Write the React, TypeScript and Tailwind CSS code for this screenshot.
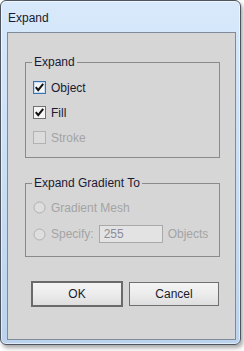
import React from "react";

const font = { fontFamily: '"Liberation Sans", Arial, sans-serif' };

function CheckBox({ checked, variant }: { checked: boolean; variant: "focus" | "normal" | "disabled" }) {
  const border = variant === "focus" ? "#3a74b0" : variant === "normal" ? "#707070" : "#b2b2b2";
  const fill = variant === "disabled" ? "#dcdcdc" : "#f6f6f6";
  return (
    <svg width="13" height="13" viewBox="0 0 13 13" className="shrink-0">
      <rect x="0.5" y="0.5" width="12" height="12" fill={fill} stroke={border} />
      {variant === "focus" && <rect x="1.5" y="1.5" width="10" height="10" fill="none" stroke="#c9ddf2" />}
      {checked && (
        <path d="M2.8 6.2 L5.2 9.2 L10.2 2.8" fill="none" stroke="#111" strokeWidth="2" />
      )}
    </svg>
  );
}

function Radio() {
  return (
    <svg width="13" height="13" viewBox="0 0 13 13" className="shrink-0">
      <circle cx="6.5" cy="6.5" r="5.5" fill="#dedede" stroke="#b0b0b0" />
    </svg>
  );
}

export default function App() {
  return (
    <div className="w-[244px] h-[351px] bg-white" style={font}>
      <div className="w-[241px] h-[345px] flex flex-col rounded-[6px] border border-[#4e555e] bg-[linear-gradient(180deg,#d8e9fb_0%,#cce0f6_40%,#bcd3ed_100%)] shadow-[2px_3px_4px_rgba(0,0,0,0.35),inset_0_0_0_1px_rgba(255,255,255,0.55)]">
        <div className="h-[31px] shrink-0 flex items-center pl-[7px] pt-[2px] text-[12px] text-[#1a1a2e]">
          Expand
        </div>
        <div className="flex-1 ml-[6px] mr-[4px] mb-[4px] border border-[#7f8b98] bg-[#d6d6d6] flex flex-col">
          <fieldset className="ml-[17px] mt-[22px] w-[195px] border border-[#8a8a8a] pl-[6px] pr-[6px] pb-[13px]">
            <legend className="px-[2px] text-[12px] leading-[14px] text-[#1a1a35]">Expand</legend>
            <div className="pt-[12px] pl-[1px] flex flex-col gap-[12px] text-[12px]">
              <div className="h-[13px] flex items-center gap-[5px] text-[#1a1a35]">
                <CheckBox checked variant="focus" />
                <span>Object</span>
              </div>
              <div className="h-[13px] flex items-center gap-[5px] text-[#1a1a35]">
                <CheckBox checked variant="normal" />
                <span>Fill</span>
              </div>
              <div className="h-[13px] flex items-center gap-[5px] text-[#a4a4a4]">
                <CheckBox checked={false} variant="disabled" />
                <span>Stroke</span>
              </div>
            </div>
          </fieldset>
          <fieldset className="ml-[17px] mt-[18px] w-[195px] border border-[#8a8a8a] pl-[6px] pr-[6px] pb-[13px]">
            <legend className="px-[2px] text-[12px] leading-[14px] text-[#1a1a35]">Expand Gradient To</legend>
            <div className="pt-[11px] pl-[1px] flex flex-col gap-[11px] text-[12px] text-[#a4a4a4]">
              <div className="h-[13px] flex items-center gap-[5px]">
                <Radio />
                <span>Gradient Mesh</span>
              </div>
              <div className="h-[18px] flex items-center">
                <Radio />
                <span className="ml-[5px]">Specify:</span>
                <div className="ml-[5px] w-[64px] h-[18px] border border-[#a9a9a9] bg-[#e3e3e3] flex items-center pl-[4px] text-[#8c8c9a]">
                  255
                </div>
                <span className="ml-[5px]">Objects</span>
              </div>
            </div>
          </fieldset>
          <div className="ml-[24px] mt-[25px] flex gap-[7px] text-[12px] text-[#1a1a2e]">
            <button className="w-[90px] h-[24px] border border-[#6a6a6a] outline outline-1 outline-[#6a6a6a] bg-[linear-gradient(180deg,#f4f4f4_0%,#ececec_50%,#dedede_100%)] flex items-center justify-center">
              OK
            </button>
            <button className="w-[90px] h-[24px] border border-[#707070] bg-[linear-gradient(180deg,#f4f4f4_0%,#ececec_50%,#dedede_100%)] flex items-center justify-center">
              Cancel
            </button>
          </div>
        </div>
      </div>
    </div>
  );
}
